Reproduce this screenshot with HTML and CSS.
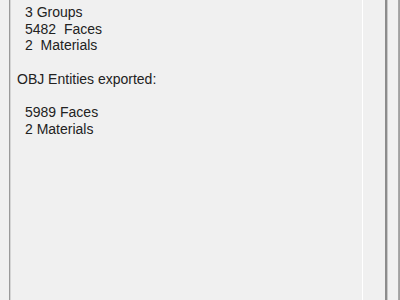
FILE: index.html
```html
<!DOCTYPE html>
<html>
<head>
<meta charset="utf-8">
<link rel="stylesheet" href="styles.css">
</head>
<body>
<div class="window">
  <div class="panel">
    <div class="log">
      <div class="line indent">3 Groups</div>
      <div class="line indent">5482  Faces</div>
      <div class="line indent">2  Materials</div>
      <div class="line blank"> </div>
      <div class="line">OBJ Entities exported:</div>
      <div class="line blank"> </div>
      <div class="line indent">5989 Faces</div>
      <div class="line indent">2 Materials</div>
    </div>
  </div>
  <div class="side">
    <div class="gap"></div>
    <div class="rail"></div>
    <div class="edge"></div>
  </div>
</div>
</body>
</html>
```
FILE: styles.css
```css
html, body {
  margin: 0;
  padding: 0;
  background: #f0f0f0;
  width: 400px;
  height: 300px;
  overflow: hidden;
}
.window {
  display: flex;
  height: 300px;
  padding-left: 9px;
}
.panel {
  flex: 1;
  border-left: 1px solid #9a9a9a;
  box-shadow: inset 1px 0 0 #d4d4d4;
  border-right: 1px solid #ffffff;
  padding-left: 7px;
}
.log {
  font-family: "Liberation Sans", Arial, sans-serif;
  font-size: 14px;
  color: #222222;
  line-height: 16.7px;
  padding-top: 4px;
}
.line {
  white-space: pre;
  height: 16.7px;
}
.indent {
  padding-left: 8px;
}
.side {
  width: 37px;
  display: flex;
}
.gap {
  width: 22px;
}
.rail {
  width: 11px;
  border-left: 2px solid #8c8c8c;
  box-shadow: inset 1px 0 0 #c8c8c8;
}
.edge {
  flex: 1;
  border-left: 1px solid #a8a8a8;
  background: linear-gradient(to right, #7a7a7a, #9a9a9a 40%, #c0c0c0);
}
```
